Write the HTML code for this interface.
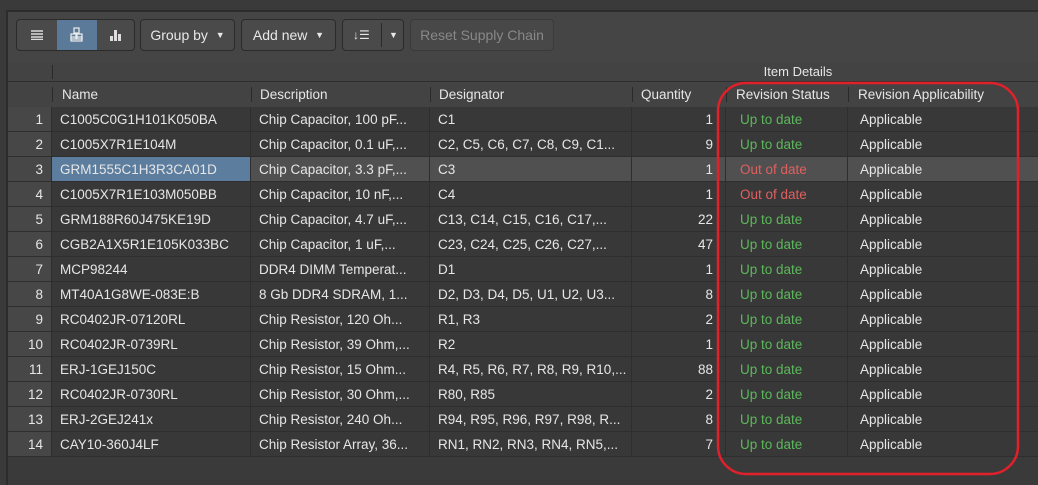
<!DOCTYPE html>
<html><head><style>
body{margin:0;width:1038px;height:485px;background:#3a3a3a;font-family:"Liberation Sans",sans-serif;font-size:13.5px;color:#e6e6e6;overflow:hidden;position:relative}
.abs{position:absolute}
.tb{left:6px;top:10px;width:1032px;height:50px;background:#454545;border-top:2px solid #2c2c2c;border-left:2px solid #2c2c2c;border-bottom:2px solid #2c2c2c}
.btn{position:absolute;top:19px;height:32px;border:1px solid #2b2b2b;border-radius:4px;background:#4a4a4a;box-sizing:border-box;display:flex;align-items:center;justify-content:center;color:#e8e8e8;font-size:14px}
.grid{left:6px;top:62px;width:1032px;height:423px;background:#3a3a3a;border-left:2px solid #2c2c2c}
.row{position:absolute;left:0;height:25px;width:1032px;background:#383838;border-bottom:1px solid #2e2e2e;box-sizing:border-box}
.c{position:absolute;top:0;height:24px;line-height:26px;border-right:1px solid #2e2e2e;box-sizing:border-box;padding-left:8px;white-space:nowrap;overflow:hidden}
.num{left:0;width:44px;background:#474747;text-align:right;padding-right:8px;padding-left:0}
.g{color:#5cb85c}.r{color:#e06060}
</style></head><body>
<div class="abs tb"></div>
<div class="btn" style="left:16px;width:119px;padding:0"></div>
<div class="abs" style="left:17px;top:20px;width:40px;height:30px;display:flex;align-items:center;justify-content:center"><svg width="14" height="10"><path d="M1 1h12M1 4h12M1 7h12M1 9.5h12" stroke="#ddd" stroke-width="1.5"/></svg></div>
<div class="abs" style="left:57px;top:20px;width:40px;height:30px;background:#5b7a99;display:flex;align-items:center;justify-content:center"><svg width="16" height="16" fill="none" stroke="#eee" stroke-width="1.2"><rect x="5" y="1" width="5" height="5"/><rect x="2" y="7" width="5" height="5"/><rect x="8" y="7" width="5" height="5"/><rect x="2" y="10" width="11" height="4"/></svg></div>
<div class="abs" style="left:97px;top:20px;width:37px;height:30px;display:flex;align-items:center;justify-content:center"><svg width="14" height="12" fill="#ddd"><rect x="1" y="7" width="3" height="5"/><rect x="5" y="1" width="3" height="11"/><rect x="9" y="5" width="3" height="7"/></svg></div>
<div class="btn" style="left:140px;width:95px">Group by&nbsp;&nbsp;<span style="font-size:9px">▼</span></div>
<div class="btn" style="left:241px;width:95px">Add new&nbsp;&nbsp;<span style="font-size:9px">▼</span></div>
<div class="btn" style="left:342px;width:62px;justify-content:flex-start;padding-left:10px"><span style="font-size:12px">↓☰</span><span style="position:absolute;left:38px;top:3px;width:1px;height:24px;background:#2b2b2b"></span><span style="position:absolute;left:46px;font-size:9px">▼</span></div>
<div class="btn" style="left:410px;width:144px;color:#888;background:#484848;border-color:#3a3a3a">Reset Supply Chain</div>

<div class="abs grid">
<div class="abs" style="left:0;top:0;width:1032px;height:19px;background:#434343;border-bottom:1px solid #2e2e2e"></div>
<div class="abs" style="left:44px;top:3px;width:1px;height:14px;background:#2a2a2a"></div>
<div class="abs" style="left:700px;top:0;width:180px;height:20px;line-height:20px;text-align:center;font-size:13px">Item Details</div>
<div class="abs" style="left:0;top:20px;width:1032px;height:25px;background:#434343;border-bottom:1px solid #2e2e2e;font-size:13.5px">
<div class="abs" style="left:44px;top:5px;width:1px;height:15px;background:#2a2a2a"></div>
<span class="abs" style="left:54px;top:5px">Name</span>
<div class="abs" style="left:243px;top:5px;width:1px;height:15px;background:#2a2a2a"></div>
<span class="abs" style="left:252px;top:5px">Description</span>
<div class="abs" style="left:422px;top:5px;width:1px;height:15px;background:#2a2a2a"></div>
<span class="abs" style="left:431px;top:5px">Designator</span>
<div class="abs" style="left:624px;top:5px;width:1px;height:15px;background:#2a2a2a"></div>
<span class="abs" style="left:633px;top:5px">Quantity</span>
<div class="abs" style="left:718px;top:5px;width:1px;height:15px;background:#2a2a2a"></div>
<span class="abs" style="left:728px;top:5px">Revision Status</span>
<div class="abs" style="left:840px;top:5px;width:1px;height:15px;background:#2a2a2a"></div>
<span class="abs" style="left:850px;top:5px">Revision Applicability</span>
</div>
<div id="rows"></div>
</div>
<svg class="abs" style="left:0;top:0" width="1038" height="485"><rect x="718" y="83" width="300" height="391" rx="28" fill="none" stroke="#e0202a" stroke-width="2.5"/></svg>
<script>
var d=[["C1005C0G1H101K050BA","Chip Capacitor, 100 pF...","C1",1,1],["C1005X7R1E104M","Chip Capacitor, 0.1 uF,...","C2, C5, C6, C7, C8, C9, C1...",9,1],["GRM1555C1H3R3CA01D","Chip Capacitor, 3.3 pF,...","C3",1,0],["C1005X7R1E103M050BB","Chip Capacitor, 10 nF,...","C4",1,0],["GRM188R60J475KE19D","Chip Capacitor, 4.7 uF,...","C13, C14, C15, C16, C17,...",22,1],["CGB2A1X5R1E105K033BC","Chip Capacitor, 1 uF,...","C23, C24, C25, C26, C27,...",47,1],["MCP98244","DDR4 DIMM Temperat...","D1",1,1],["MT40A1G8WE-083E:B","8 Gb DDR4 SDRAM, 1...","D2, D3, D4, D5, U1, U2, U3...",8,1],["RC0402JR-07120RL","Chip Resistor, 120 Oh...","R1, R3",2,1],["RC0402JR-0739RL","Chip Resistor, 39 Ohm,...","R2",1,1],["ERJ-1GEJ150C","Chip Resistor, 15 Ohm...","R4, R5, R6, R7, R8, R9, R10,...",88,1],["RC0402JR-0730RL","Chip Resistor, 30 Ohm,...","R80, R85",2,1],["ERJ-2GEJ241x","Chip Resistor, 240 Oh...","R94, R95, R96, R97, R98, R...",8,1],["CAY10-360J4LF","Chip Resistor Array, 36...","RN1, RN2, RN3, RN4, RN5,...",7,1]];
var h="";d.forEach(function(r,i){var sel=i==2;
h+='<div class="row" style="top:'+(45+i*25)+'px;'+(sel?'background:#505050':'')+'">'+
'<div class="c num">'+(i+1)+'</div>'+
'<div class="c" style="left:44px;width:199px;'+(sel?'background:#5c7d9e':'')+'">'+r[0]+'</div>'+
'<div class="c" style="left:243px;width:179px">'+r[1]+'</div>'+
'<div class="c" style="left:422px;width:202px">'+r[2]+'</div>'+
'<div class="c" style="left:624px;width:94px;padding-left:0"><span style="position:absolute;right:12px">'+r[3]+'</span></div>'+
'<div class="c '+(r[4]?'g':'r')+'" style="left:718px;width:122px;padding-left:14px">'+(r[4]?'Up to date':'Out of date')+'</div>'+
'<div class="c" style="left:840px;width:192px;padding-left:12px;border-right:none">Applicable</div></div>';});
document.getElementById("rows").innerHTML=h;
</script>
</body></html>
